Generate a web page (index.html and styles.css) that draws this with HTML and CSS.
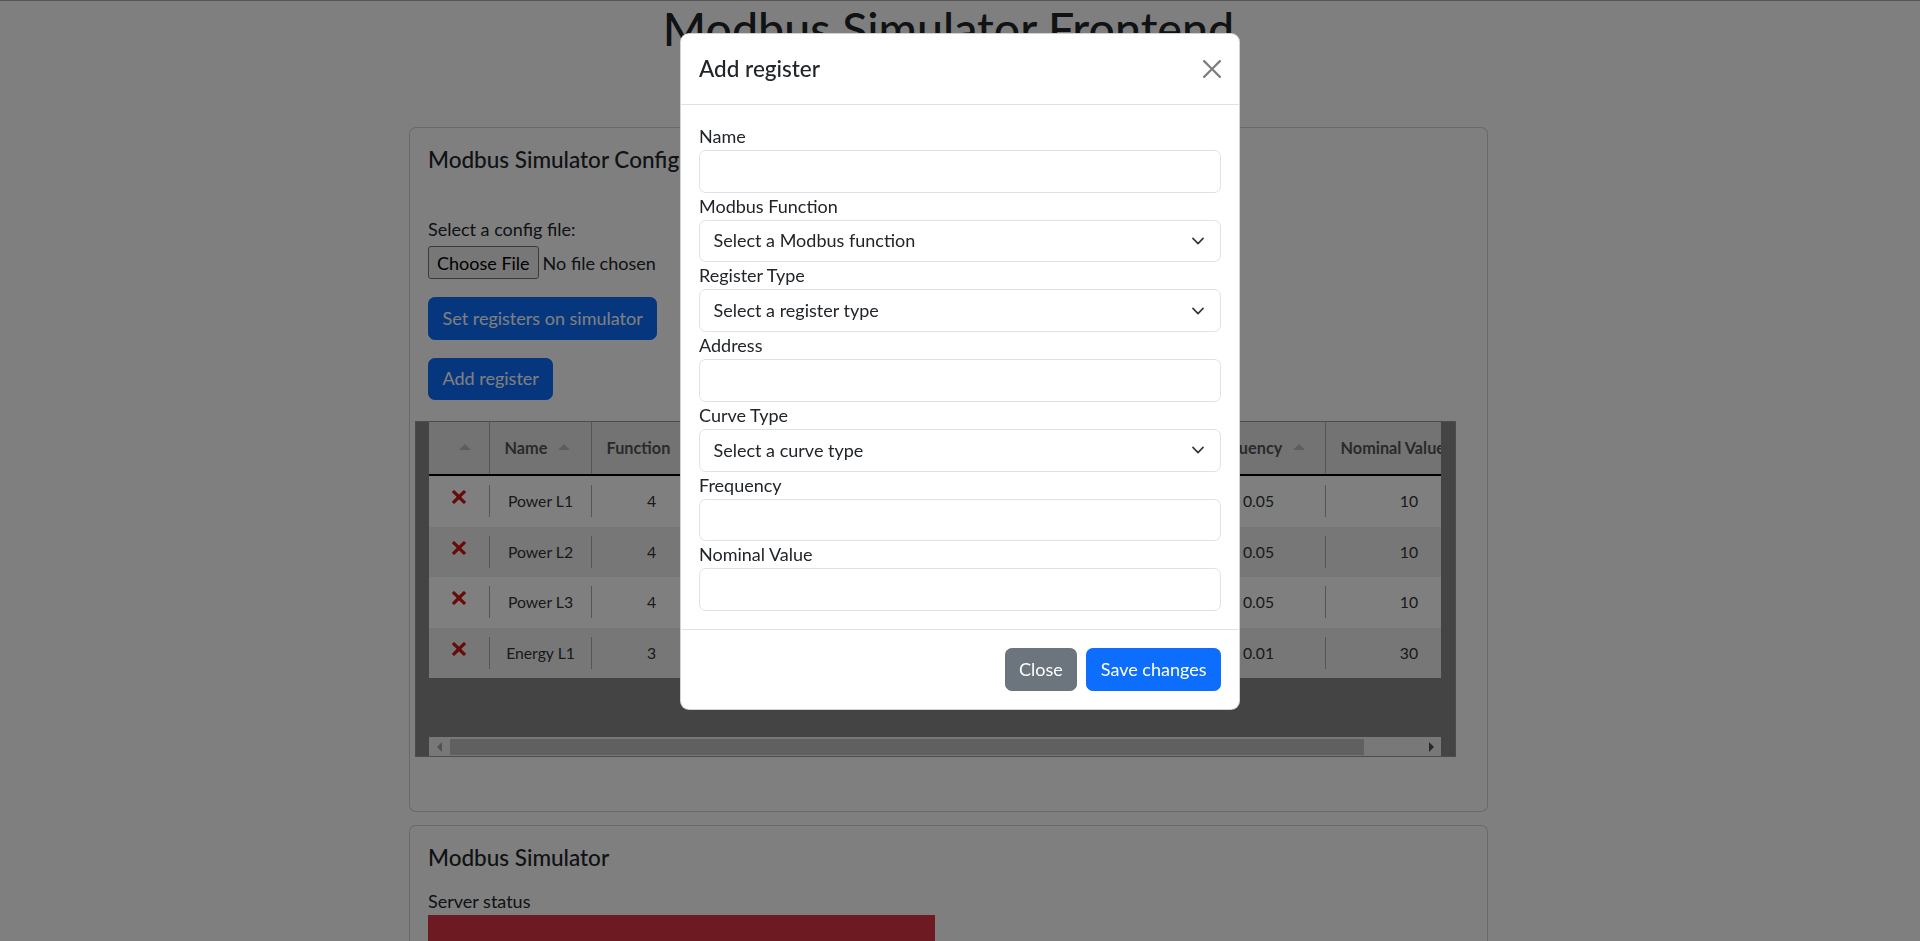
FILE: index.html
```html
<!DOCTYPE html>
<html lang="en">
<head>
    <meta charset="UTF-8">
    <meta name="viewport" content="width=device-width, initial-scale=1.0">
    <title>Modbus Simulator Frontend</title>
    <link rel="stylesheet" href="styles.css">
</head>
<body class="modal-open">

    <div class="page">
        <h1 class="page-title">Modbus Simulator Frontend</h1>

        <div class="card config-card">
            <div class="card-body">
                <h5 class="card-title">Modbus Simulator Configuration</h5>

                <div class="config-file">
                    <label for="configFile" class="config-label">Select a config file:</label>
                    <input type="file" id="configFile" class="file-input">
                </div>

                <button class="btn btn-primary btn-block btn-set">Set registers on simulator</button>
                <button class="btn btn-primary btn-block btn-add">Add register</button>

                <div class="register-table">
                    <div class="table-holder">
                        <div class="table-header">
                            <div class="th col-del"><span class="sort-arrow"></span></div>
                            <div class="th col-name">Name <span class="sort-arrow"></span></div>
                            <div class="th col-func">Function <span class="sort-arrow"></span></div>
                            <div class="th col-type">Register Type <span class="sort-arrow"></span></div>
                            <div class="th col-addr">Address <span class="sort-arrow"></span></div>
                            <div class="th col-curve">Curve Type <span class="sort-arrow"></span></div>
                            <div class="th col-freq">Frequency <span class="sort-arrow"></span></div>
                            <div class="th col-nominal">Nominal Value <span class="sort-arrow"></span></div>
                        </div>

                        <div class="table-row">
                            <div class="td col-del"><svg class="icon-cross" viewBox="0 0 24 24"><path d="M22.245,4.015c0.313,0.313,0.313,0.826,0,1.139l-6.276,6.27c-0.313,0.312-0.313,0.826,0,1.14l6.273,6.272c0.313,0.313,0.313,0.826,0,1.14l-2.285,2.277c-0.314,0.312-0.828,0.312-1.142,0l-6.271-6.271c-0.313-0.313-0.828-0.313-1.141,0l-6.276,6.267c-0.313,0.313-0.828,0.313-1.141,0l-2.282-2.28c-0.313-0.313-0.313-0.826,0-1.14l6.278-6.269c0.313-0.312,0.313-0.826,0-1.14L1.709,5.147c-0.314-0.313-0.314-0.827,0-1.14l2.284-2.278C4.308,1.417,4.821,1.417,5.135,1.73L11.405,8c0.314,0.314,0.828,0.314,1.141,0.001l6.276-6.267c0.312-0.312,0.826-0.312,1.141,0L22.245,4.015z"/></svg></div>
                            <div class="td col-name">Power L1</div>
                            <div class="td col-func">4</div>
                            <div class="td col-type">input</div>
                            <div class="td col-addr">0</div>
                            <div class="td col-curve">sine</div>
                            <div class="td col-freq">0.05</div>
                            <div class="td col-nominal">10</div>
                        </div>
                        <div class="table-row">
                            <div class="td col-del"><svg class="icon-cross" viewBox="0 0 24 24"><path d="M22.245,4.015c0.313,0.313,0.313,0.826,0,1.139l-6.276,6.27c-0.313,0.312-0.313,0.826,0,1.14l6.273,6.272c0.313,0.313,0.313,0.826,0,1.14l-2.285,2.277c-0.314,0.312-0.828,0.312-1.142,0l-6.271-6.271c-0.313-0.313-0.828-0.313-1.141,0l-6.276,6.267c-0.313,0.313-0.828,0.313-1.141,0l-2.282-2.28c-0.313-0.313-0.313-0.826,0-1.14l6.278-6.269c0.313-0.312,0.313-0.826,0-1.14L1.709,5.147c-0.314-0.313-0.314-0.827,0-1.14l2.284-2.278C4.308,1.417,4.821,1.417,5.135,1.73L11.405,8c0.314,0.314,0.828,0.314,1.141,0.001l6.276-6.267c0.312-0.312,0.826-0.312,1.141,0L22.245,4.015z"/></svg></div>
                            <div class="td col-name">Power L2</div>
                            <div class="td col-func">4</div>
                            <div class="td col-type">input</div>
                            <div class="td col-addr">2</div>
                            <div class="td col-curve">sine</div>
                            <div class="td col-freq">0.05</div>
                            <div class="td col-nominal">10</div>
                        </div>
                        <div class="table-row">
                            <div class="td col-del"><svg class="icon-cross" viewBox="0 0 24 24"><path d="M22.245,4.015c0.313,0.313,0.313,0.826,0,1.139l-6.276,6.27c-0.313,0.312-0.313,0.826,0,1.14l6.273,6.272c0.313,0.313,0.313,0.826,0,1.14l-2.285,2.277c-0.314,0.312-0.828,0.312-1.142,0l-6.271-6.271c-0.313-0.313-0.828-0.313-1.141,0l-6.276,6.267c-0.313,0.313-0.828,0.313-1.141,0l-2.282-2.28c-0.313-0.313-0.313-0.826,0-1.14l6.278-6.269c0.313-0.312,0.313-0.826,0-1.14L1.709,5.147c-0.314-0.313-0.314-0.827,0-1.14l2.284-2.278C4.308,1.417,4.821,1.417,5.135,1.73L11.405,8c0.314,0.314,0.828,0.314,1.141,0.001l6.276-6.267c0.312-0.312,0.826-0.312,1.141,0L22.245,4.015z"/></svg></div>
                            <div class="td col-name">Power L3</div>
                            <div class="td col-func">4</div>
                            <div class="td col-type">input</div>
                            <div class="td col-addr">4</div>
                            <div class="td col-curve">sine</div>
                            <div class="td col-freq">0.05</div>
                            <div class="td col-nominal">10</div>
                        </div>
                        <div class="table-row">
                            <div class="td col-del"><svg class="icon-cross" viewBox="0 0 24 24"><path d="M22.245,4.015c0.313,0.313,0.313,0.826,0,1.139l-6.276,6.27c-0.313,0.312-0.313,0.826,0,1.14l6.273,6.272c0.313,0.313,0.313,0.826,0,1.14l-2.285,2.277c-0.314,0.312-0.828,0.312-1.142,0l-6.271-6.271c-0.313-0.313-0.828-0.313-1.141,0l-6.276,6.267c-0.313,0.313-0.828,0.313-1.141,0l-2.282-2.28c-0.313-0.313-0.313-0.826,0-1.14l6.278-6.269c0.313-0.312,0.313-0.826,0-1.14L1.709,5.147c-0.314-0.313-0.314-0.827,0-1.14l2.284-2.278C4.308,1.417,4.821,1.417,5.135,1.73L11.405,8c0.314,0.314,0.828,0.314,1.141,0.001l6.276-6.267c0.312-0.312,0.826-0.312,1.141,0L22.245,4.015z"/></svg></div>
                            <div class="td col-name">Energy L1</div>
                            <div class="td col-func">3</div>
                            <div class="td col-type">holding</div>
                            <div class="td col-addr">6</div>
                            <div class="td col-curve">linear</div>
                            <div class="td col-freq">0.01</div>
                            <div class="td col-nominal">30</div>
                        </div>
                    </div>

                    <div class="scrollbar">
                        <div class="scroll-btn"><svg viewBox="0 0 6 10"><polygon points="5,0 5,10 0,5" fill="#a3a3a3"/></svg></div>
                        <div class="scroll-track"><div class="scroll-thumb"></div></div>
                        <div class="scroll-btn"><svg viewBox="0 0 6 10"><polygon points="1,0 1,10 6,5" fill="#505050"/></svg></div>
                    </div>
                </div>
            </div>
        </div>

        <div class="card sim-card">
            <div class="card-body">
                <h5 class="card-title">Modbus Simulator</h5>
                <div class="status-label">Server status</div>
                <div class="server-status"></div>
            </div>
        </div>
    </div>

    <div class="modal-backdrop"></div>

    <div class="modal">
        <div class="modal-dialog">
            <div class="modal-content">
                <div class="modal-header">
                    <h5 class="modal-title">Add register</h5>
                    <button class="btn-close" aria-label="Close">
                        <svg viewBox="0 0 16 16"><path d="M.293.293a1 1 0 0 1 1.414 0L8 6.586 14.293.293a1 1 0 1 1 1.414 1.414L9.414 8l6.293 6.293a1 1 0 0 1-1.414 1.414L8 9.414l-6.293 6.293a1 1 0 0 1-1.414-1.414L6.586 8 .293 1.707a1 1 0 0 1 0-1.414"/></svg>
                    </button>
                </div>
                <div class="modal-body">
                    <label for="regName" class="form-label">Name</label>
                    <input id="regName" class="form-control" type="text">

                    <label for="regFunction" class="form-label">Modbus Function</label>
                    <select id="regFunction" class="form-select">
                        <option selected>Select a Modbus function</option>
                        <option value="3">3 - Read Holding Registers</option>
                        <option value="4">4 - Read Input Registers</option>
                    </select>

                    <label for="regType" class="form-label">Register Type</label>
                    <select id="regType" class="form-select">
                        <option selected>Select a register type</option>
                        <option value="holding">holding</option>
                        <option value="input">input</option>
                    </select>

                    <label for="regAddress" class="form-label">Address</label>
                    <input id="regAddress" class="form-control" type="text">

                    <label for="regCurve" class="form-label">Curve Type</label>
                    <select id="regCurve" class="form-select">
                        <option selected>Select a curve type</option>
                        <option value="sine">sine</option>
                        <option value="linear">linear</option>
                    </select>

                    <label for="regFrequency" class="form-label">Frequency</label>
                    <input id="regFrequency" class="form-control" type="text">

                    <label for="regNominal" class="form-label">Nominal Value</label>
                    <input id="regNominal" class="form-control" type="text">
                </div>
                <div class="modal-footer">
                    <button class="btn btn-secondary">Close</button>
                    <button class="btn btn-primary">Save changes</button>
                </div>
            </div>
        </div>
    </div>

</body>
</html>
```

FILE: styles.css
```css
* {
    box-sizing: border-box;
}

html {
    font-size: 18px;
}

body {
    margin: 0;
    padding-right: 23px;
    border-top: 1px solid #aaa;
    font-family: "Lato", "Noto Sans", sans-serif;
    font-size: 18px;
    line-height: 1.5;
    color: #212529;
    background-color: #fff;
    overflow: hidden;
    height: 941px;
}

.page {
    width: 1079px;
    margin: 0 auto;
}

.page-title {
    margin: 0 0 9px;
    font-size: 46.5px;
    font-weight: 500;
    line-height: 54px;
    text-align: center;
}

/* cards */
.card {
    border: 1px solid rgba(0, 0, 0, 0.175);
    border-radius: 6.75px;
    background-color: #fff;
}
.card-body {
    padding: 18px;
}
.card-title {
    margin: 0 0 9px;
    font-size: 22.5px;
    font-weight: 500;
    line-height: 1.2;
}
.config-card {
    margin-top: 72px;
}
.sim-card {
    margin-top: 13px;
}

.config-file {
    margin-top: 43px;
}
.config-label {
    display: block;
    margin-bottom: 3px;
}
.file-input {
    display: block;
    font-family: inherit;
    font-size: 18px;
    color: #212529;
    line-height: 27px;
}
.file-input::file-selector-button {
    height: 33px;
    margin-right: 4px;
    padding: 0 8px;
    font-family: inherit;
    font-size: 18px;
    color: #000;
    background-color: #efefef;
    border: 1px solid #767676;
    border-radius: 3px;
}

/* buttons */
.btn {
    display: inline-block;
    padding: 6.75px 13.5px;
    font-family: inherit;
    font-size: 18px;
    line-height: 27px;
    color: #fff;
    border: 1px solid transparent;
    border-radius: 6.75px;
    cursor: pointer;
}
.btn-primary {
    background-color: #0d6efd;
    border-color: #0d6efd;
}
.btn-secondary {
    background-color: #6c757d;
    border-color: #6c757d;
}
.btn-block {
    display: block;
}
.btn-set {
    margin-top: 18px;
}
.btn-add {
    margin-top: 18px;
}

/* register table */
.register-table {
    width: 1041px;
    margin: 21px 0 36px -13.5px;
    padding: 0 13.5px;
    background-color: #888;
    border: 1px solid #999;
}
.table-holder {
    height: 315px;
    overflow: hidden;
    font-size: 15.75px;
}
.table-header,
.table-row {
    display: flex;
    width: max-content;
}
.table-header {
    height: 54px;
    background-color: #e6e6e6;
    border-bottom: 2px solid #000;
    color: #555;
    font-size: 16.3px;
    font-weight: bold;
}
.th {
    display: flex;
    align-items: center;
    gap: 11px;
    flex: none;
    padding-left: 14.5px;
    border-right: 1px solid #aaa;
}
.th.col-del {
    justify-content: center;
    padding-left: 11px;
}
.sort-arrow {
    width: 0;
    height: 0;
    border-left: 6.75px solid transparent;
    border-right: 6.75px solid transparent;
    border-bottom: 6.75px solid #bbb;
    margin-top: -2px;
}
.table-row {
    height: 50.5px;
    align-items: center;
    background-color: #fff;
    color: #333;
}
.table-row:nth-child(odd) {
    background-color: #efefef;
}
.td {
    display: flex;
    align-items: center;
    justify-content: center;
    flex: none;
    height: 32px;
    border-right: 1px solid #aaa;
}
.icon-cross {
    width: 16px;
    height: 16px;
    margin-top: -8px;
    fill: #ce1515;
}

.col-del { width: 61px; }
.col-name { width: 102px; }
.col-func { width: 120px; }
.col-type { width: 180px; }
.col-addr { width: 120px; }
.col-curve { width: 180px; }
.col-freq { width: 134px; }
.col-nominal { width: 167px; }

.scrollbar {
    display: flex;
    height: 19px;
    background-color: #f1f1f1;
}
.scroll-btn {
    display: flex;
    align-items: center;
    justify-content: center;
    width: 21px;
}
.scroll-btn svg {
    width: 6px;
    height: 10px;
}
.scroll-track {
    flex: 1;
    padding: 2px 0 1px;
}
.scroll-thumb {
    width: 914px;
    height: 100%;
    background-color: #c1c1c1;
}

/* simulator card */
.status-label {
    margin-top: 17px;
}
.server-status {
    width: 507px;
    height: 54px;
    background-color: #dc3545;
}

/* modal */
.modal-backdrop {
    position: fixed;
    inset: 0;
    background-color: rgba(0, 0, 0, 0.5);
}
.modal {
    position: fixed;
    inset: 0;
    display: flex;
    justify-content: center;
    align-items: flex-start;
}
.modal-dialog {
    width: 560px;
    margin-top: 33px;
}
.modal-content {
    background-color: #fff;
    border: 1px solid rgba(0, 0, 0, 0.175);
    border-radius: 9px;
}
.modal-header {
    display: flex;
    align-items: center;
    padding: 18px;
    border-bottom: 1px solid #dee2e6;
}
.modal-title {
    margin: 0;
    font-size: 22.5px;
    font-weight: 500;
    line-height: 1.5;
}
.btn-close {
    display: flex;
    margin: -9px -9px -9px auto;
    padding: 9px;
    background: transparent;
    border: 0;
    cursor: pointer;
}
.btn-close svg {
    width: 18px;
    height: 18px;
    fill: #000;
    opacity: 0.5;
}
.modal-body {
    padding: 18px;
}
.form-label {
    display: block;
    line-height: 27px;
}
.form-control,
.form-select {
    display: block;
    width: 100%;
    height: 42.75px;
    padding: 6.75px 13.5px;
    font-family: inherit;
    font-size: 18px;
    line-height: 27px;
    color: #212529;
    background-color: #fff;
    border: 1px solid #dee2e6;
    border-radius: 6.75px;
}
.form-select {
    padding-right: 40.5px;
    appearance: none;
    background-image: url("data:image/svg+xml,%3csvg xmlns='http://www.w3.org/2000/svg' viewBox='0 0 16 16'%3e%3cpath fill='none' stroke='%23343a40' stroke-linecap='round' stroke-linejoin='round' stroke-width='2' d='m2 5 6 6 6-6'/%3e%3c/svg%3e");
    background-repeat: no-repeat;
    background-position: right 13.5px center;
    background-size: 18px 13.5px;
}
.modal-footer {
    display: flex;
    justify-content: flex-end;
    padding: 13.5px;
    border-top: 1px solid #dee2e6;
}
.modal-footer .btn {
    margin: 4.5px;
}
```
